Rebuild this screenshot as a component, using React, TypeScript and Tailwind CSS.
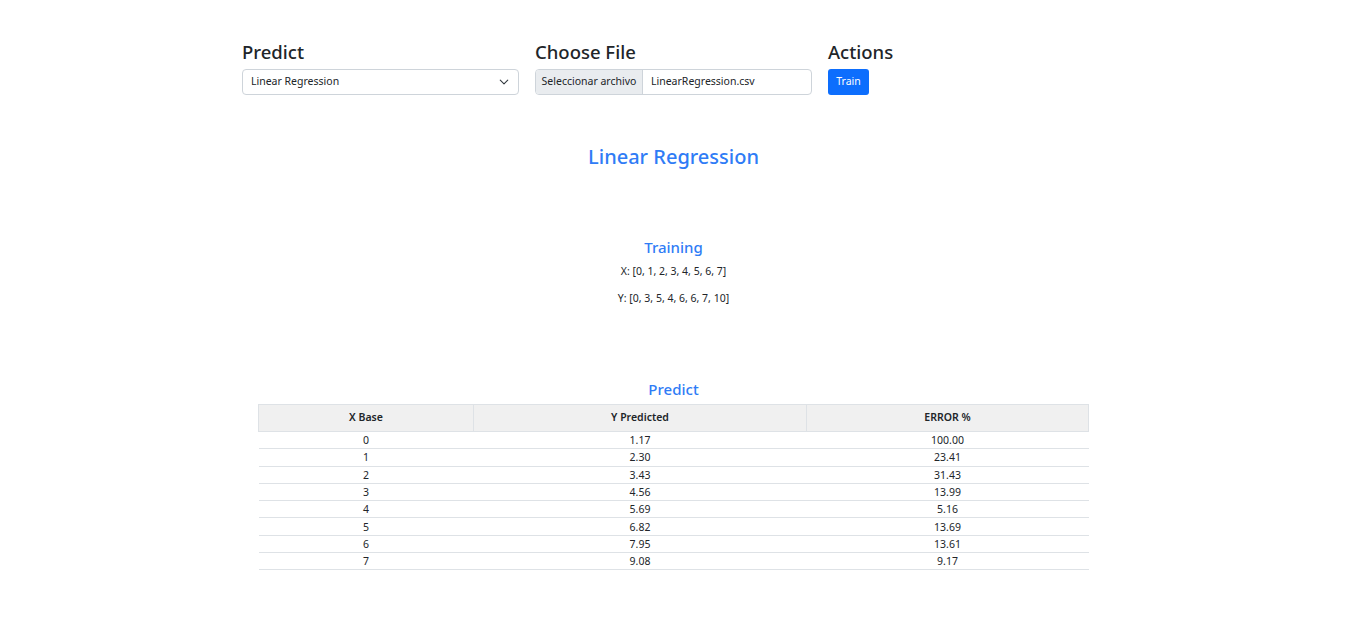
import React from "react";

const rows = [
  ["0", "1.17", "100.00"],
  ["1", "2.30", "23.41"],
  ["2", "3.43", "31.43"],
  ["3", "4.56", "13.99"],
  ["4", "5.69", "5.16"],
  ["5", "6.82", "13.69"],
  ["6", "7.95", "13.61"],
  ["7", "9.08", "9.17"],
];

export default function App() {
  return (
    <div
      className="min-h-[622px] w-full bg-white text-[#212529]"
      style={{ fontFamily: '"Noto Sans", "Open Sans", sans-serif' }}
    >
      <div className="flex justify-center pt-[40px]">
        <div className="w-[293px] px-2">
          <h5 className="text-[18.5px] font-medium leading-[24px] mb-[5px]">Predict</h5>
          <div className="flex h-[26px] items-center justify-between rounded-[4px] border border-[#ced4da] px-2 text-[10.5px]">
            <span>Linear Regression</span>
            <svg width="10" height="10" viewBox="0 0 16 16" className="mr-[1px]">
              <path d="M2 5l6 6 6-6" fill="none" stroke="#343a40" strokeWidth="1.8" strokeLinecap="round" strokeLinejoin="round" />
            </svg>
          </div>
        </div>
        <div className="w-[293px] px-2">
          <h5 className="text-[18.5px] font-medium leading-[24px] mb-[5px]">Choose File</h5>
          <div className="flex h-[26px] items-center overflow-hidden rounded-[4px] border border-[#ced4da] text-[10.5px]">
            <span className="flex h-full w-[107px] items-center justify-center border-r border-[#ced4da] bg-[#e9ecef]">
              Seleccionar archivo
            </span>
            <span className="pl-2">LinearRegression.csv</span>
          </div>
        </div>
        <div className="w-[293px] px-2">
          <h5 className="text-[18.5px] font-medium leading-[24px] mb-[5px]">Actions</h5>
          <button className="flex h-[26px] w-[41px] items-center justify-center rounded-[3px] bg-[#0d6efd] text-[10.5px] text-white">
            Train
          </button>
        </div>
      </div>

      <h2 className="mt-[50px] text-center text-[20px] font-medium leading-[24px] text-[#2f7cf6]">
        Linear Regression
      </h2>

      <h3 className="mt-[68px] text-center text-[15px] font-medium leading-[20px] text-[#2f7cf6]">
        Training
      </h3>
      <p className="mt-[6px] text-center text-[10.5px] leading-[16px]">X: [0, 1, 2, 3, 4, 5, 6, 7]</p>
      <p className="mt-[11px] text-center text-[10.5px] leading-[16px]">Y: [0, 3, 5, 4, 6, 6, 7, 10]</p>

      <h3 className="mt-[73px] text-center text-[15px] font-medium leading-[20px] text-[#2f7cf6]">
        Predict
      </h3>
      <div className="mt-[5px] flex justify-center">
        <table className="w-[831px] border-collapse text-[10.5px]">
          <thead>
            <tr className="bg-[#f0f0f0]">
              <th className="h-[27px] w-[215px] border border-[#dee2e6] font-semibold">X Base</th>
              <th className="h-[27px] w-[333px] border border-[#dee2e6] font-semibold">Y Predicted</th>
              <th className="h-[27px] border border-[#dee2e6] font-semibold">ERROR %</th>
            </tr>
          </thead>
          <tbody>
            {rows.map((r) => (
              <tr key={r[0]} className="border-b border-[#dee2e6]">
                {r.map((c, i) => (
                  <td key={i} className="h-[17.3px] p-0 text-center leading-[16px]">
                    {c}
                  </td>
                ))}
              </tr>
            ))}
          </tbody>
        </table>
      </div>
    </div>
  );
}
